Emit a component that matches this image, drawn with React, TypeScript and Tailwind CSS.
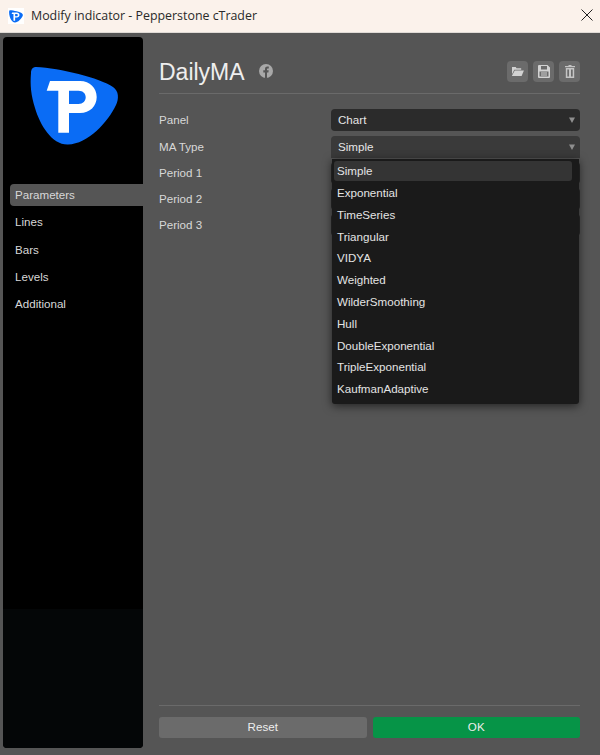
const maTypes = [
  "Simple",
  "Exponential",
  "TimeSeries",
  "Triangular",
  "VIDYA",
  "Weighted",
  "WilderSmoothing",
  "Hull",
  "DoubleExponential",
  "TripleExponential",
  "KaufmanAdaptive",
];

const navItems = ["Parameters", "Lines", "Bars", "Levels", "Additional"];

const Logo = ({ className }: { className: string }) => (
  <svg viewBox="30 66 89 80" className={className}>
    <path
      d="M36 67 C60 68 100 78 113 87 C119 91 119 99 116 105 C108 122 88 144 68 144.5 C52 145 40 125 35 108 C31 95 30 85 31 73 C31 69 33 67 36 67 Z"
      fill="#0a6cf5"
    />
    <path
      fillRule="evenodd"
      d="M50 81 H80 C90 81 96.700 88 96.700 97 C96.700 106 90 113 80 113 H69 V132.700 H58.300 V90.700 H46.700 Z M69 90.700 V104 H78.500 C83 104 85.700 101 85.700 97.300 C85.700 93.500 83 90.700 78.500 90.700 Z"
      fill="#ffffff"
    />
  </svg>
);

const Caret = () => (
  <svg viewBox="0 0 6 6" className="w-[6px] h-[6px]">
    <path d="M0 .5 H6 L3 6 Z" fill="#8f8f8f" />
  </svg>
);

const Select = ({ value, open }: { value: string; open?: boolean }) => (
  <div
    className={`flex-1 h-[22px] flex items-center justify-between pl-[7px] pr-[5px] text-[11.600px] text-[#e6e6e6] ${
      open ? "bg-[#3a3a3a] rounded-t-[4px]" : "bg-[#2b2b2b] rounded-[4px]"
    }`}
  >
    <span>{value}</span>
    <Caret />
  </div>
);

const Row = ({ label, children, className }: { label: string; children: React.ReactNode; className: string }) => (
  <div className={`flex items-center text-[11.600px] text-[#d8d8d8] ${className}`}>
    <span className="w-[172px] shrink-0">{label}</span>
    {children}
  </div>
);

const IconButton = ({ children }: { children: React.ReactNode }) => (
  <div className="w-[21px] h-[21px] rounded-[4px] bg-[#6b6b6b] flex items-center justify-center">{children}</div>
);

export default function App() {
  return (
    <div className="w-[600px] h-[755px] flex flex-col overflow-hidden font-['Liberation_Sans',sans-serif] bg-[#555555]">
      {/* title bar */}
      <div className="h-[33px] shrink-0 bg-[#fbf2eb] border-b border-[#e0dbd6] flex items-center pl-[8px] pr-[8px]">
        <div className="w-[16px] h-[16px] bg-white flex items-center justify-center">
          <Logo className="w-[14px] h-[13px]" />
        </div>
        <span className="ml-[7px] text-[12.400px] text-[#2a2a2a] font-['Open_Sans',sans-serif] flex-1">
          Modify indicator - Pepperstone cTrader
        </span>
        <svg viewBox="0 0 12 12" className="w-[12px] h-[12px] mr-[-1px] mb-[2px]">
          <path d="M.5 .5 L11.500 11.500 M11.500 .5 L.5 11.500" stroke="#222222" strokeWidth="1" />
        </svg>
      </div>

      <div className="flex-1 flex min-h-0 pl-[3px] pt-[4px] pb-[7px] pr-[20px]">
        {/* sidebar */}
        <aside className="w-[140px] shrink-0 rounded-[4px] bg-black flex flex-col overflow-hidden">
          <div className="h-[147px] shrink-0 pt-[29px] pl-[27px]">
            <Logo className="w-[89px] h-[80px]" />
          </div>
          <nav className="flex flex-col gap-[5.200px] pl-[7px] text-[11.600px] text-[#d8d8d8]">
            {navItems.map((item, i) => (
              <div
                key={item}
                className={`h-[22px] flex items-center pl-[5px] ${i === 0 ? "bg-[#555555] rounded-l-[4px]" : ""}`}
              >
                {item}
              </div>
            ))}
          </nav>
          <div className="mt-auto h-[139px] bg-[#040607]" />
        </aside>

        {/* main */}
        <main className="relative flex-1 ml-[16px] flex flex-col min-w-0">
          <header className="h-[57px] shrink-0 border-b border-[#6a6a6a] flex items-center pt-[12px]">
            <h1 className="text-[23px] text-[#eeeeee] leading-none mt-[2px]">DailyMA</h1>
            <svg viewBox="0 0 14 14" className="w-[14px] h-[14px] ml-[14px]">
              <circle cx="7" cy="7" r="7" fill="#a8a8a8" />
              <path d="M6 14 V8.500 H4.300 V6.300 H6 V5 C6 3.300 7 2.500 8.400 2.500 L9.800 2.600 V4.400 H8.900 C8.200 4.400 8 4.800 8 5.300 V6.300 H9.700 L9.400 8.500 H8 V14 Z" fill="#555555" />
            </svg>
            <div className="ml-auto flex gap-[5px]">
              <IconButton>
                <svg viewBox="0 0 14 12" className="w-[13px] h-[11px]">
                  <path d="M1 1 H5 L6 2.500 H11 V4 H3.500 L1 9 Z M4 5 H14 L11.500 11 H.8 Z" fill="#d2d2d2" />
                </svg>
              </IconButton>
              <IconButton>
                <svg viewBox="0 0 12 13" className="w-[12px] h-[13px]">
                  <path
                    fillRule="evenodd"
                    d="M1 0 H9.500 L12 2.500 V12 a1 1 0 0 1 -1 1 H1 a1 1 0 0 1 -1 -1 V1 a1 1 0 0 1 1 -1 Z M3 1 V4.500 H9 V1 Z M1.500 6.500 V11.500 H10.500 V6.500 Z"
                    fill="#d2d2d2"
                  />
                  <path d="M3 8 H9 M3 10 H9" stroke="#d2d2d2" strokeWidth="1" />
                </svg>
              </IconButton>
              <IconButton>
                <svg viewBox="0 0 10 13" className="w-[10px] h-[13px]">
                  <path
                    fillRule="evenodd"
                    d="M3.500 0 H6.500 V1 H10 V2.300 H0 V1 H3.500 Z M.8 3 H9.200 V13 H.8 Z M2.300 4.500 V11.500 H4 V4.500 Z M6 4.500 V11.500 H7.700 V4.500 Z"
                    fill="#c4c4c4"
                  />
                </svg>
              </IconButton>
            </div>
          </header>

          <Row label="Panel" className="mt-[15px]">
            <Select value="Chart" />
          </Row>
          <Row label="MA Type" className="mt-[5px]">
            <Select value="Simple" open />
          </Row>
          {["Period 1", "Period 2", "Period 3"].map((label) => (
            <Row key={label} label={label} className="mt-[4px]">
              <div className="flex-1 h-[22px] rounded-[4px] bg-[#2b2b2b]" />
            </Row>
          ))}

          {/* open dropdown */}
          <div className="absolute left-[173px] right-[1px] top-[122px] h-[245px] bg-[#1a1a1a] rounded-b-[3px] shadow-[0_2px_10px_rgba(0,0,0,0.6)] pt-[2px] pl-[2px] pr-[7px] text-[11.600px] text-[#e4e4e4]">
            {maTypes.map((t, i) => (
              <div
                key={t}
                className={`flex items-center pl-[3px] ${
                  i === 0 ? "h-[20px] mb-[0.800px] bg-[#343434] rounded-[3px]" : "h-[21.800px]"
                }`}
              >
                {t}
              </div>
            ))}
          </div>

          <footer className="mt-auto mb-[10px] border-t border-[#6a6a6a] pt-[11px] flex gap-[6px]">
            <button className="flex-1 h-[21px] pb-[1px] rounded-[3px] bg-[#6b6b6b] text-[11.600px] text-[#eeeeee]">Reset</button>
            <button className="flex-1 h-[21px] pb-[1px] rounded-[3px] bg-[#069447] text-[11.600px] text-[#eeeeee]">OK</button>
          </footer>
        </main>
      </div>
    </div>
  );
}
